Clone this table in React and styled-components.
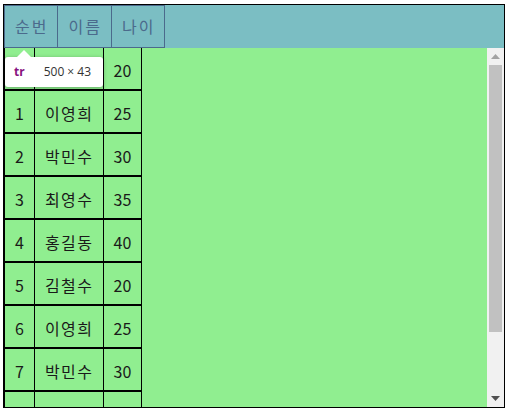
import React from "react";
import styled, { createGlobalStyle } from "styled-components";

const Global = createGlobalStyle`
  html, body { margin: 0; padding: 0; background: #fff; }
  body { font-family: "Noto Sans CJK KR", "Noto Sans", sans-serif; }
`;

const Frame = styled.div`
  position: relative;
  margin: 4px 0 0 3px;
  width: 502px;
  height: 404px;
  box-sizing: border-box;
  border: 1px solid #000;
  background: #90ee90;
  display: flex;
  flex-direction: column;
  font-size: 16px;
  line-height: 21px;
`;

const HeadTable = styled.table`
  width: 100%;
  border-collapse: separate;
  border-spacing: 0;
  background: #7bbec3;
`;

const HeadRow = styled.tr`
  display: flex;
`;

const HeadCell = styled.th`
  padding: 10px 9px 10px 10px;
  font-weight: normal;
  letter-spacing: 2px;
  color: #4b6a8c;
  border: 1px solid #4b6a8c;
  border-left: ${(p) => (p.$first ? "1px solid #4b6a8c" : "none")};
  white-space: nowrap;
`;

const BodyArea = styled.div`
  flex: 1;
  min-height: 0;
  display: flex;
`;

const BodyScroll = styled.div`
  flex: 1;
  overflow: hidden;
`;

const BodyTable = styled.table`
  border-collapse: separate;
  border-spacing: 0;
`;

const Row = styled.tr`
  height: 43px;
`;

const Cell = styled.td`
  box-sizing: border-box;
  padding: ${(p) => (p.$wide ? "12px 9px 8px 10px" : "12px 10px 8px")};
  letter-spacing: ${(p) => (p.$wide ? "1.5px" : "0")};
  color: #1a1a1a;
  text-align: center;
  white-space: nowrap;
  border-right: 1px solid #000;
  border-bottom: 2px solid #000;
  border-left: ${(p) => (p.$first ? "1px solid #000" : "none")};
`;

const ScrollBar = styled.div`
  width: 17px;
  display: flex;
  flex-direction: column;
  background: #f1f1f1;
`;

const ArrowButton = styled.div`
  height: 17px;
  display: flex;
  align-items: center;
  justify-content: center;
`;

const Track = styled.div`
  flex: 1;
  padding: 0 2px;
  display: flex;
  flex-direction: column;
`;

const Thumb = styled.div`
  height: 267px;
  background: #c1c1c1;
`;

const Tip = styled.div`
  position: absolute;
  left: 1px;
  top: 52px;
  width: 98px;
  height: 30px;
  background: #fff;
  border-radius: 3px;
  box-shadow: 0 1px 4px rgba(0, 0, 0, 0.3);
  display: flex;
  align-items: center;
  gap: 19px;
  padding-left: 9px;
  box-sizing: border-box;
  font-family: "Open Sans", "Noto Sans", sans-serif;
  font-size: 12px;
  line-height: 16px;
  &::before {
    content: "";
    position: absolute;
    left: 12px;
    top: -7px;
    border-left: 7px solid transparent;
    border-right: 7px solid transparent;
    border-bottom: 7px solid #fff;
  }
`;

const TipTag = styled.span`
  color: #881280;
  font-weight: bold;
`;

const TipSize = styled.span`
  color: #333;
`;

const names = ["김철수", "이영희", "박민수", "최영수", "홍길동"];
const ages = [20, 25, 30, 35, 40];
const rows = Array.from({ length: 10 }, (_, i) => ({
  id: i,
  name: names[i % 5],
  age: ages[i % 5],
}));

export default function App() {
  return (
    <>
      <Global />
      <Frame>
        <HeadTable>
          <thead>
            <HeadRow>
              <HeadCell $first>순번</HeadCell>
              <HeadCell>이름</HeadCell>
              <HeadCell>나이</HeadCell>
            </HeadRow>
          </thead>
        </HeadTable>
        <BodyArea>
          <BodyScroll>
            <BodyTable>
              <tbody>
                {rows.map((r) => (
                  <Row key={r.id}>
                    <Cell $first>{r.id}</Cell>
                    <Cell $wide>{r.name}</Cell>
                    <Cell>{r.age}</Cell>
                  </Row>
                ))}
              </tbody>
            </BodyTable>
          </BodyScroll>
          <ScrollBar>
            <ArrowButton>
              <svg width="9" height="5" viewBox="0 0 9 5">
                <polygon points="0,5 9,5 4.5,0" fill="#a3a3a3" />
              </svg>
            </ArrowButton>
            <Track>
              <Thumb />
            </Track>
            <ArrowButton>
              <svg width="9" height="5" viewBox="0 0 9 5">
                <polygon points="0,0 9,0 4.5,5" fill="#505050" />
              </svg>
            </ArrowButton>
          </ScrollBar>
        </BodyArea>
        <Tip>
          <TipTag>tr</TipTag>
          <TipSize>500 × 43</TipSize>
        </Tip>
      </Frame>
    </>
  );
}
